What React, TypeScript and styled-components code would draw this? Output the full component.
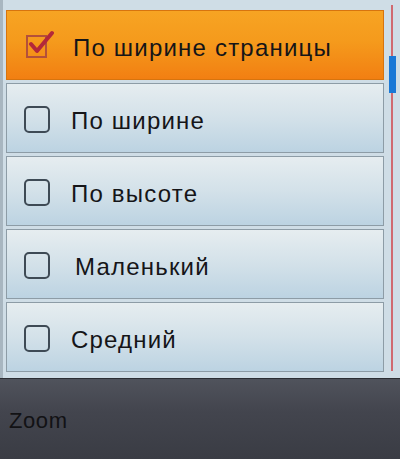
import styled, { createGlobalStyle } from "styled-components";

const GlobalStyle = createGlobalStyle`
  html, body {
    margin: 0;
    padding: 0;
    background: #cfdde6;
  }
  * {
    box-sizing: border-box;
  }
`;

const items = [
  { label: "По ширине страницы", checked: true },
  { label: "По ширине", checked: false },
  { label: "По высоте", checked: false },
  { label: "Маленький", checked: false, indent: 4 },
  { label: "Средний", checked: false },
];

export default function App() {
  return (
    <>
      <GlobalStyle />
      <Screen>
        <ListArea>
          <List>
            {items.map((item) => (
              <Row key={item.label} $selected={item.checked}>
                {item.checked ? (
                  <CheckedBox>
                    <svg width="30" height="30" viewBox="0 0 30 30">
                      <path
                        d="M7 17 L13 24 L28 6"
                        fill="none"
                        stroke="#b3283a"
                        strokeWidth="4"
                        strokeLinecap="round"
                        strokeLinejoin="round"
                      />
                    </svg>
                  </CheckedBox>
                ) : (
                  <EmptyBox />
                )}
                <Label $indent={item.indent ?? 0}>{item.label}</Label>
              </Row>
            ))}
          </List>
          <ScrollTrack>
            <ScrollLine />
            <ScrollThumb />
          </ScrollTrack>
        </ListArea>
        <BottomBar>
          <BarLabel>Zoom</BarLabel>
        </BottomBar>
      </Screen>
    </>
  );
}

const Screen = styled.div`
  width: 400px;
  height: 459px;
  display: flex;
  flex-direction: column;
  background: #cfdde6;
  border-left: 3px solid #a8b6c0;
  font-family: "Liberation Sans", Arial, sans-serif;
`;

const ListArea = styled.div`
  height: 378px;
  display: flex;
  padding: 10px 0 0 3px;
`;

const List = styled.div`
  width: 381px;
  display: flex;
  flex-direction: column;
  gap: 3px;
`;

const Row = styled.div<{ $selected: boolean }>`
  height: 70px;
  display: flex;
  align-items: center;
  padding-left: 17px;
  border: 1px solid ${(p) => (p.$selected ? "#d7740e" : "#8d9ca6")};
  background: ${(p) =>
    p.$selected
      ? "linear-gradient(180deg, #f7a423 0%, #f59a1c 45%, #f27f12 100%)"
      : "linear-gradient(180deg, #e6edf0 0%, #d3e1e9 50%, #bcd3e2 100%)"};
`;

const EmptyBox = styled.div`
  width: 26px;
  height: 27px;
  margin-top: 3px;
  border: 2px solid #3e4a55;
  border-radius: 5px;
  flex-shrink: 0;
`;

const CheckedBox = styled.div`
  position: relative;
  width: 21px;
  height: 23px;
  margin: 3px 5px 0 2px;
  border: 2px solid #b4503a;
  flex-shrink: 0;

  svg {
    position: absolute;
    left: -4px;
    top: -10px;
  }
`;

const Label = styled.span<{ $indent: number }>`
  margin-left: ${(p) => 21 + p.$indent}px;
  margin-top: 5px;
  font-size: 24px;
  letter-spacing: 1.2px;
  color: #151518;
  white-space: nowrap;
`;

const ScrollTrack = styled.div`
  position: relative;
  width: 16px;
  display: flex;
  justify-content: center;
`;

const ScrollLine = styled.div`
  width: 2px;
  height: 366px;
  margin-top: -5px;
  background: #d06a70;
`;

const ScrollThumb = styled.div`
  position: absolute;
  left: 5px;
  top: 46px;
  width: 7px;
  height: 37px;
  background: #1a78d6;
`;

const BottomBar = styled.div`
  flex: 1;
  margin-left: -3px;
  display: flex;
  align-items: center;
  padding-left: 9px;
  background: linear-gradient(180deg, #50535c 0%, #43454e 40%, #3a3c44 100%);
  border-top: 1px solid #2c2e33;
`;

const BarLabel = styled.span`
  font-size: 22px;
  letter-spacing: 0.6px;
  color: #121215;
  margin-top: 4px;
`;
